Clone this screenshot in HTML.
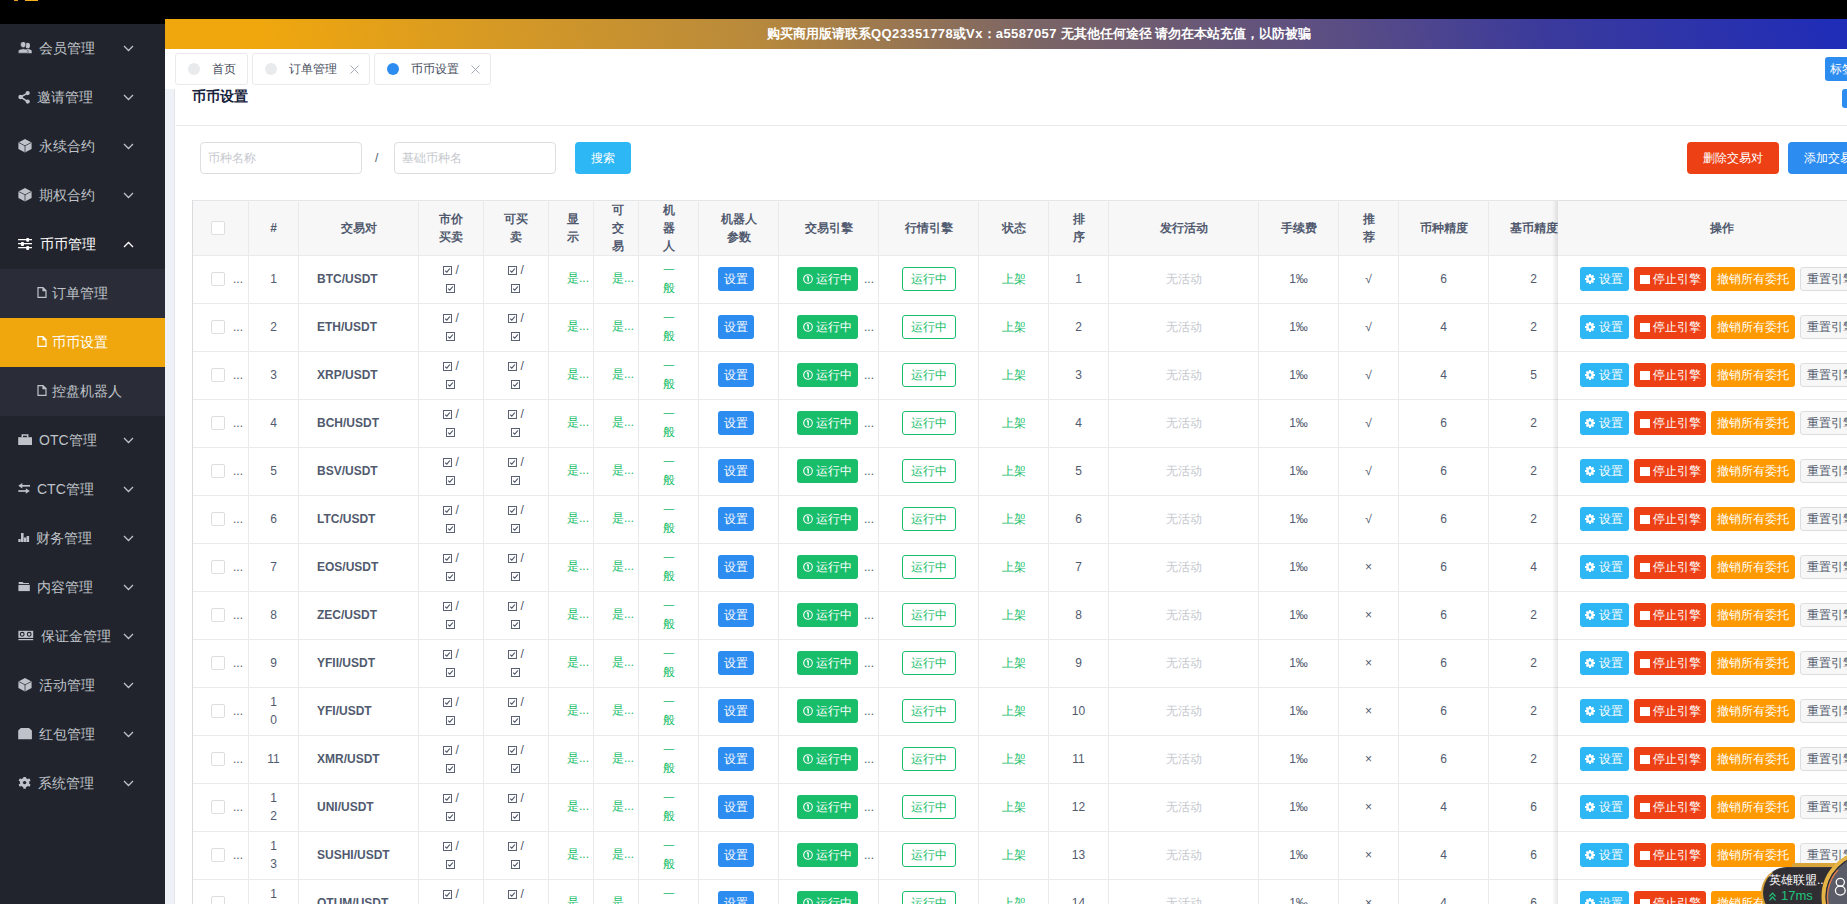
<!DOCTYPE html><html><head><meta charset="utf-8"><style>
*{box-sizing:border-box;margin:0;padding:0}
html,body{width:1847px;height:904px;overflow:hidden;background:#fff;font-family:"Liberation Sans",sans-serif;font-size:12px;color:#515a6e}
.abs{position:absolute}
#top{left:0;top:0;width:1847px;height:24px;background:#000}
#side{left:0;top:24px;width:165px;height:880px;background:#21242c}
.mi{position:absolute;left:0;width:165px;height:49px;color:#bfc2c8;font-size:14px}
.mi .ic{position:absolute;left:18px;top:18px;width:14px;height:14px}
.mi .tx{position:absolute;top:0;line-height:49px;white-space:nowrap}
.mi .cv{position:absolute;left:123px;top:21px;width:11px;height:7px}
.sub{position:absolute;left:0;width:165px;height:49px;color:#bfc2c8;font-size:14px;background:#2a2d37}
.sub .ic{position:absolute;left:37px;top:18px;width:10px;height:11px}
.sub .tx{position:absolute;left:52px;top:0;line-height:49px;white-space:nowrap}
#banner{left:165px;top:19px;width:1682px;height:30px;background:linear-gradient(75deg,#f0a70e 0%,#f0a70e 6%,#b98a3c 35%,#7a6466 52%,#5a4d84 70%,#3b3a9c 82%,#1e2cb8 100%)}
#bantext{left:767px;top:19px;height:30px;line-height:30px;color:#fff;font-weight:bold;font-size:13px;white-space:nowrap}
#strip{left:165px;top:89px;width:10px;height:815px;background:#eef1f6;border-right:1px solid #e3e3ea}
.tab{position:absolute;top:53px;height:32px;border:1px solid #e8eaec;border-radius:3px;background:#fff;color:#464c5b;font-size:12px}
.tab .dot{position:absolute;top:9px;width:12px;height:12px;border-radius:50%;background:#e8eaec}
.tab .tt{position:absolute;top:0;line-height:30px;white-space:nowrap}
.tab .x{position:absolute;top:11px;width:9px;height:9px}
#card{left:176px;top:89px;width:1671px;height:815px;background:#fff}
</style></head><body>
<style>
.hd{position:absolute;top:201px;height:54px;background:#f7f7f8}
.c{position:absolute;display:flex;align-items:center;justify-content:center;text-align:center;line-height:18px;font-size:12px;color:#515a6e}
.th{font-weight:bold;color:#515a6e}
.vl{position:absolute;width:1px;background:#e8eaec}
.hl{position:absolute;height:1px;background:#e8eaec}
.cb{position:absolute;width:14px;height:14px;border:1px solid #dcdee2;border-radius:2px;background:#fff}
.g{color:#19be6b}
.btn{display:inline-block;height:24px;line-height:22px;border-radius:3px;color:#fff;font-size:12px;white-space:nowrap;border:1px solid transparent}
</style>
<div id="top" class="abs"><div class="abs" style="left:14px;top:0;width:4px;height:1px;background:#f5a623;border-radius:2px"></div><div class="abs" style="left:25px;top:0;width:13px;height:1px;background:#f5b21c"></div></div>
<div id="side" class="abs">
<div class="mi" style="top:0px;color:#bfc2c8"><svg class="ic" style="top:18px;" viewBox="0 0 14 14"><ellipse cx="9.8" cy="3.6" rx="2.2" ry="2.9" fill="#bfc2c8"/><path d="M7.5 7.2 Q11 6.6 13.7 8.4 V11.2 H9Z" fill="#bfc2c8"/><ellipse cx="5.2" cy="2.6" rx="2.7" ry="3.2" fill="#bfc2c8" stroke="#21242c" stroke-width="0.7"/><path d="M0.3 11.2 V8.6 Q2 7 5.2 6.8 Q8.6 7 10.1 8.6 V11.2Z" fill="#bfc2c8" stroke="#21242c" stroke-width="0.5"/></svg><span class="tx" style="left:39px">会员管理</span><svg class="cv" viewBox="0 0 11 7"><path d="M1 1 L5.5 5.5 L10 1" stroke="#bfc2c8" stroke-width="1.3" fill="none"/></svg></div>
<div class="mi" style="top:49px;color:#bfc2c8"><svg class="ic" style="top:18px;" viewBox="0 0 14 14"><circle cx="9.7" cy="2.1" r="2.1" fill="#bfc2c8"/><circle cx="2.6" cy="6" r="2.3" fill="#bfc2c8"/><circle cx="9.7" cy="10.6" r="2.1" fill="#bfc2c8"/><path d="M2.6 6 L9.7 2.1 M2.6 6 L9.7 10.6" stroke="#bfc2c8" stroke-width="1.5"/></svg><span class="tx" style="left:37px">邀请管理</span><svg class="cv" viewBox="0 0 11 7"><path d="M1 1 L5.5 5.5 L10 1" stroke="#bfc2c8" stroke-width="1.3" fill="none"/></svg></div>
<div class="mi" style="top:98px;color:#bfc2c8"><svg class="ic" style="top:17px;" viewBox="0 0 14 14"><path d="M7 0 L13.6 3.4 V10 L7 13.4 L0.4 10 V3.4Z" fill="#bfc2c8"/><path d="M0.8 3.6 L7 6.8 L13.2 3.6 M7 6.8 V13.2" stroke="#21242c" stroke-width="0.7" fill="none"/></svg><span class="tx" style="left:39px">永续合约</span><svg class="cv" viewBox="0 0 11 7"><path d="M1 1 L5.5 5.5 L10 1" stroke="#bfc2c8" stroke-width="1.3" fill="none"/></svg></div>
<div class="mi" style="top:147px;color:#bfc2c8"><svg class="ic" style="top:17px;" viewBox="0 0 14 14"><path d="M7 0 L13.6 3.4 V10 L7 13.4 L0.4 10 V3.4Z" fill="#bfc2c8"/><path d="M0.8 3.6 L7 6.8 L13.2 3.6 M7 6.8 V13.2" stroke="#21242c" stroke-width="0.7" fill="none"/></svg><span class="tx" style="left:39px">期权合约</span><svg class="cv" viewBox="0 0 11 7"><path d="M1 1 L5.5 5.5 L10 1" stroke="#bfc2c8" stroke-width="1.3" fill="none"/></svg></div>
<div class="mi" style="top:196px;color:#fff"><svg class="ic" style="top:18px;" viewBox="0 0 14 14"><path d="M0.1 1.6 H14 M0.1 5.6 H14 M0.1 9.6 H14" stroke="#fff" stroke-width="1.4"/><rect x="8.2" y="0" width="2.9" height="3.8" rx="1" fill="#fff"/><rect x="2.9" y="4" width="3.1" height="4" rx="1" fill="#fff"/><rect x="8.2" y="8" width="2.9" height="4" rx="1" fill="#fff"/></svg><span class="tx" style="left:40px">币币管理</span><svg class="cv" viewBox="0 0 11 7"><path d="M1 6 L5.5 1.5 L10 6" stroke="#fff" stroke-width="1.3" fill="none"/></svg></div>
<div class="mi" style="top:392px;color:#bfc2c8"><svg class="ic" style="top:18px;" viewBox="0 0 14 14"><rect x="0.2" y="3.2" width="13.8" height="7.8" fill="#bfc2c8"/><path d="M4.3 3.5 V0.9 H9.7 V3.5" stroke="#bfc2c8" stroke-width="1.5" fill="none"/></svg><span class="tx" style="left:39px">OTC管理</span><svg class="cv" viewBox="0 0 11 7"><path d="M1 1 L5.5 5.5 L10 1" stroke="#bfc2c8" stroke-width="1.3" fill="none"/></svg></div>
<div class="mi" style="top:441px;color:#bfc2c8"><svg class="ic" style="top:18px;" viewBox="0 0 14 14"><path d="M3 2.8 H12" stroke="#bfc2c8" stroke-width="1.7"/><path d="M0.3 2.8 L4.3 0 V5.6Z" fill="#bfc2c8"/><path d="M0.3 8 H9" stroke="#bfc2c8" stroke-width="1.7"/><path d="M11.8 8 L7.8 5.2 V10.8Z" fill="#bfc2c8"/></svg><span class="tx" style="left:37px">CTC管理</span><svg class="cv" viewBox="0 0 11 7"><path d="M1 1 L5.5 5.5 L10 1" stroke="#bfc2c8" stroke-width="1.3" fill="none"/></svg></div>
<div class="mi" style="top:490px;color:#bfc2c8"><svg class="ic" style="top:18px;" viewBox="0 0 14 14"><rect x="0.3" y="7" width="2.4" height="3" fill="#bfc2c8"/><rect x="3" y="1" width="2.6" height="9" fill="#bfc2c8"/><rect x="5.9" y="5.5" width="2.5" height="4.5" fill="#bfc2c8"/><rect x="8.6" y="4" width="2.5" height="6" fill="#bfc2c8"/></svg><span class="tx" style="left:36px">财务管理</span><svg class="cv" viewBox="0 0 11 7"><path d="M1 1 L5.5 5.5 L10 1" stroke="#bfc2c8" stroke-width="1.3" fill="none"/></svg></div>
<div class="mi" style="top:539px;color:#bfc2c8"><svg class="ic" style="top:18px;" viewBox="0 0 14 14"><path d="M0.7 0.9 H4.6 L5.6 2 H11 V3.1 H0.7Z" fill="#bfc2c8"/><rect x="0.4" y="3.9" width="11.4" height="6.2" fill="#bfc2c8"/></svg><span class="tx" style="left:37px">内容管理</span><svg class="cv" viewBox="0 0 11 7"><path d="M1 1 L5.5 5.5 L10 1" stroke="#bfc2c8" stroke-width="1.3" fill="none"/></svg></div>
<div class="mi" style="top:588px;color:#bfc2c8"><svg class="ic" style="top:18px;width:16px" viewBox="0 0 16 14"><rect x="0.4" y="0.8" width="14.8" height="7.1" fill="#bfc2c8"/><circle cx="4.2" cy="4.3" r="1.9" fill="none" stroke="#21242c" stroke-width="1.1"/><circle cx="11.2" cy="4.3" r="1.9" fill="none" stroke="#21242c" stroke-width="1.1"/><rect x="0.4" y="9" width="14.8" height="1.2" fill="#bfc2c8"/></svg><span class="tx" style="left:41px">保证金管理</span><svg class="cv" viewBox="0 0 11 7"><path d="M1 1 L5.5 5.5 L10 1" stroke="#bfc2c8" stroke-width="1.3" fill="none"/></svg></div>
<div class="mi" style="top:637px;color:#bfc2c8"><svg class="ic" style="top:17px;" viewBox="0 0 14 14"><path d="M7 0 L13.6 3.4 V10 L7 13.4 L0.4 10 V3.4Z" fill="#bfc2c8"/><path d="M0.8 3.6 L7 6.8 L13.2 3.6 M7 6.8 V13.2" stroke="#21242c" stroke-width="0.7" fill="none"/></svg><span class="tx" style="left:39px">活动管理</span><svg class="cv" viewBox="0 0 11 7"><path d="M1 1 L5.5 5.5 L10 1" stroke="#bfc2c8" stroke-width="1.3" fill="none"/></svg></div>
<div class="mi" style="top:686px;color:#bfc2c8"><svg class="ic" style="top:18px;" viewBox="0 0 14 14"><path d="M2.8 0 H11 L13.9 2.6 V11.2 H0.2 V2.6Z" fill="#bfc2c8"/></svg><span class="tx" style="left:39px">红包管理</span><svg class="cv" viewBox="0 0 11 7"><path d="M1 1 L5.5 5.5 L10 1" stroke="#bfc2c8" stroke-width="1.3" fill="none"/></svg></div>
<div class="mi" style="top:735px;color:#bfc2c8"><svg class="ic" style="top:18px;" viewBox="0 0 14 14"><g fill="#bfc2c8"><circle cx="6.6" cy="5.6" r="4.7"/><rect x="5.3" y="-0.6" width="2.6" height="12.4" rx="0.5"/><rect x="5.3" y="-0.6" width="2.6" height="12.4" rx="0.5" transform="rotate(60 6.6 5.6)"/><rect x="5.3" y="-0.6" width="2.6" height="12.4" rx="0.5" transform="rotate(120 6.6 5.6)"/></g><circle cx="6.6" cy="5.6" r="1.7" fill="#21242c"/></svg><span class="tx" style="left:38px">系统管理</span><svg class="cv" viewBox="0 0 11 7"><path d="M1 1 L5.5 5.5 L10 1" stroke="#bfc2c8" stroke-width="1.3" fill="none"/></svg></div>
<div class="sub" style="top:245px;background:#2a2d37;color:#bfc2c8"><svg class="ic" viewBox="0 0 10 11"><path d="M1 0.6 H6 L9 3.6 V10.4 H1Z M6 0.6 V3.6 H9" stroke="#bfc2c8" stroke-width="1.2" fill="none"/></svg><span class="tx">订单管理</span></div>
<div class="sub" style="top:294px;background:#f0a70e;color:#fff"><svg class="ic" viewBox="0 0 10 11"><path d="M1 0.6 H6 L9 3.6 V10.4 H1Z M6 0.6 V3.6 H9" stroke="#fff" stroke-width="1.2" fill="none"/></svg><span class="tx">币币设置</span></div>
<div class="sub" style="top:343px;background:#2a2d37;color:#bfc2c8"><svg class="ic" viewBox="0 0 10 11"><path d="M1 0.6 H6 L9 3.6 V10.4 H1Z M6 0.6 V3.6 H9" stroke="#bfc2c8" stroke-width="1.2" fill="none"/></svg><span class="tx">控盘机器人</span></div>
</div>
<div id="banner" class="abs"></div>
<div id="bantext" class="abs">购买商用版请联系<span style="letter-spacing:0.4px">QQ23351778</span>或<span style="letter-spacing:0.4px">Vx</span>：<span style="letter-spacing:0.4px">a5587057 </span>无其他任何途径 请勿在本站充值，以防被骗</div>
<div class="abs" style="left:165px;top:49px;width:1682px;height:40px;background:#fff"></div>
<div id="strip" class="abs"></div>
<div id="card" class="abs"></div>
<div class="tab" style="left:175px;width:73px"><span class="dot" style="left:12px;background:#e8eaec"></span><span class="tt" style="left:36px">首页</span></div>
<div class="tab" style="left:252px;width:118px"><span class="dot" style="left:12px;background:#e8eaec"></span><span class="tt" style="left:36px">订单管理</span><svg class="x" viewBox="0 0 9 9" style="left:97px"><path d="M0.5 0.5 L8.5 8.5 M8.5 0.5 L0.5 8.5" stroke="#a4abb6" stroke-width="1"/></svg></div>
<div class="tab" style="left:374px;width:117px"><span class="dot" style="left:12px;background:#2d8cf0"></span><span class="tt" style="left:36px">币币设置</span><svg class="x" viewBox="0 0 9 9" style="left:96px"><path d="M0.5 0.5 L8.5 8.5 M8.5 0.5 L0.5 8.5" stroke="#a4abb6" stroke-width="1"/></svg></div>
<div class="abs" style="left:1825px;top:57px;width:40px;height:24px;background:#2d8cf0;border-radius:3px;color:#fff;line-height:24px;padding-left:5px;font-size:12px">标签</div>
<div class="abs" style="left:1842px;top:89px;width:20px;height:19px;background:#2d8cf0;border-radius:3px"></div>
<div class="abs" style="left:192px;top:86px;line-height:20px;font-size:14px;font-weight:bold;color:#17233d">币币设置</div>
<div class="abs" style="left:176px;top:125px;width:1671px;height:1px;background:#e8eaec"></div>
<div class="abs" style="left:200px;top:142px;width:162px;height:32px;border:1px solid #dcdee2;border-radius:4px;color:#c5c8ce;line-height:30px;padding-left:7px">币种名称</div>
<div class="abs" style="left:375px;top:142px;line-height:32px;color:#515a6e">/</div>
<div class="abs" style="left:394px;top:142px;width:162px;height:32px;border:1px solid #dcdee2;border-radius:4px;color:#c5c8ce;line-height:30px;padding-left:7px">基础币种名</div>
<div class="abs" style="left:575px;top:142px;width:56px;height:32px;background:#2db7f5;border-radius:4px;color:#fff;line-height:32px;text-align:center">搜索</div>
<div class="abs" style="left:1687px;top:142px;width:92px;height:32px;background:#ed4014;border-radius:4px;color:#fff;line-height:32px;text-align:center">删除交易对</div>
<div class="abs" style="left:1788px;top:142px;width:92px;height:32px;background:#2d8cf0;border-radius:4px;color:#fff;line-height:32px;text-align:center">添加交易对</div>
<div class="abs" style="left:192px;top:200px;width:1655px;height:55px;background:#f7f7f8"></div>
<div class="hl" style="left:192px;top:200px;width:1655px;background:#e3e5e8"></div>
<div class="hl" style="left:192px;top:255px;width:1655px"></div>
<div class="hl" style="left:192px;top:303px;width:1655px"></div>
<div class="hl" style="left:192px;top:351px;width:1655px"></div>
<div class="hl" style="left:192px;top:399px;width:1655px"></div>
<div class="hl" style="left:192px;top:447px;width:1655px"></div>
<div class="hl" style="left:192px;top:495px;width:1655px"></div>
<div class="hl" style="left:192px;top:543px;width:1655px"></div>
<div class="hl" style="left:192px;top:591px;width:1655px"></div>
<div class="hl" style="left:192px;top:639px;width:1655px"></div>
<div class="hl" style="left:192px;top:687px;width:1655px"></div>
<div class="hl" style="left:192px;top:735px;width:1655px"></div>
<div class="hl" style="left:192px;top:783px;width:1655px"></div>
<div class="hl" style="left:192px;top:831px;width:1655px"></div>
<div class="hl" style="left:192px;top:879px;width:1655px"></div>
<div class="hl" style="left:192px;top:927px;width:1655px"></div>
<div class="hl" style="left:192px;top:975px;width:1655px"></div>
<div class="vl" style="left:192px;top:200px;height:704px;background:#d9dbdf"></div>
<div class="vl" style="left:248px;top:200px;height:704px;background:#e8eaec"></div>
<div class="vl" style="left:298px;top:200px;height:704px;background:#e8eaec"></div>
<div class="vl" style="left:418px;top:200px;height:704px;background:#e8eaec"></div>
<div class="vl" style="left:483px;top:200px;height:704px;background:#e8eaec"></div>
<div class="vl" style="left:548px;top:200px;height:704px;background:#e8eaec"></div>
<div class="vl" style="left:593px;top:200px;height:704px;background:#e8eaec"></div>
<div class="vl" style="left:638px;top:200px;height:704px;background:#e8eaec"></div>
<div class="vl" style="left:698px;top:200px;height:704px;background:#e8eaec"></div>
<div class="vl" style="left:778px;top:200px;height:704px;background:#e8eaec"></div>
<div class="vl" style="left:878px;top:200px;height:704px;background:#e8eaec"></div>
<div class="vl" style="left:978px;top:200px;height:704px;background:#e8eaec"></div>
<div class="vl" style="left:1048px;top:200px;height:704px;background:#e8eaec"></div>
<div class="vl" style="left:1108px;top:200px;height:704px;background:#e8eaec"></div>
<div class="vl" style="left:1258px;top:200px;height:704px;background:#e8eaec"></div>
<div class="vl" style="left:1338px;top:200px;height:704px;background:#e8eaec"></div>
<div class="vl" style="left:1398px;top:200px;height:704px;background:#e8eaec"></div>
<div class="vl" style="left:1488px;top:200px;height:704px;background:#e8eaec"></div>
<div class="vl" style="left:1578px;top:200px;height:704px;background:#e8eaec"></div>
<div class="c th" style="left:249px;top:200px;width:49px;height:55px;"><div>#</div></div>
<div class="c th" style="left:299px;top:200px;width:119px;height:55px;"><div>交易对</div></div>
<div class="c th" style="left:419px;top:200px;width:64px;height:55px;"><div>市价<br>买卖</div></div>
<div class="c th" style="left:484px;top:200px;width:64px;height:55px;"><div>可买<br>卖</div></div>
<div class="c th" style="left:549px;top:200px;width:44px;height:55px;padding-left:3px"><div>显<br>示</div></div>
<div class="c th" style="left:594px;top:200px;width:44px;height:55px;padding-left:3px"><div>可<br>交<br>易</div></div>
<div class="c th" style="left:639px;top:200px;width:59px;height:55px;"><div>机<br>器<br>人</div></div>
<div class="c th" style="left:699px;top:200px;width:79px;height:55px;"><div>机器人<br>参数</div></div>
<div class="c th" style="left:779px;top:200px;width:99px;height:55px;"><div>交易引擎</div></div>
<div class="c th" style="left:879px;top:200px;width:99px;height:55px;"><div>行情引擎</div></div>
<div class="c th" style="left:979px;top:200px;width:69px;height:55px;"><div>状态</div></div>
<div class="c th" style="left:1049px;top:200px;width:59px;height:55px;"><div>排<br>序</div></div>
<div class="c th" style="left:1109px;top:200px;width:149px;height:55px;"><div>发行活动</div></div>
<div class="c th" style="left:1259px;top:200px;width:79px;height:55px;"><div>手续费</div></div>
<div class="c th" style="left:1339px;top:200px;width:59px;height:55px;"><div>推<br>荐</div></div>
<div class="c th" style="left:1399px;top:200px;width:89px;height:55px;"><div>币种精度</div></div>
<div class="c th" style="left:1489px;top:200px;width:89px;height:55px;"><div>基币精度</div></div>
<div class="cb" style="left:211px;top:221px"></div>
<div class="cb" style="left:211px;top:272px"></div>
<div class="abs" style="left:233px;top:270px;line-height:18px;font-size:12px;color:#515a6e">...</div>
<div class="c" style="left:249px;top:255px;width:49px;height:47px;"><div>1</div></div>
<div class="abs" style="left:317px;top:256px;height:47px;line-height:47px;font-weight:bold;font-size:12px;color:#515a6e">BTC/USDT</div>
<div class="c" style="left:419px;top:255px;width:64px;height:47px;"><div><svg width="9" height="9" viewBox="0 0 9 9" style="vertical-align:-1px"><rect x="0.5" y="0.5" width="8" height="8" fill="none" stroke="#5a6172" stroke-width="1"/><path d="M2.2 4.6 L3.8 6.2 L6.9 2.5" stroke="#4a5163" stroke-width="1.1" fill="none"/></svg>&nbsp;/<br><svg width="9" height="9" viewBox="0 0 9 9" style="vertical-align:-1px"><rect x="0.5" y="0.5" width="8" height="8" fill="none" stroke="#5a6172" stroke-width="1"/><path d="M2.2 4.6 L3.8 6.2 L6.9 2.5" stroke="#4a5163" stroke-width="1.1" fill="none"/></svg></div></div>
<div class="c" style="left:484px;top:255px;width:64px;height:47px;"><div><svg width="9" height="9" viewBox="0 0 9 9" style="vertical-align:-1px"><rect x="0.5" y="0.5" width="8" height="8" fill="none" stroke="#5a6172" stroke-width="1"/><path d="M2.2 4.6 L3.8 6.2 L6.9 2.5" stroke="#4a5163" stroke-width="1.1" fill="none"/></svg>&nbsp;/<br><svg width="9" height="9" viewBox="0 0 9 9" style="vertical-align:-1px"><rect x="0.5" y="0.5" width="8" height="8" fill="none" stroke="#5a6172" stroke-width="1"/><path d="M2.2 4.6 L3.8 6.2 L6.9 2.5" stroke="#4a5163" stroke-width="1.1" fill="none"/></svg></div></div>
<div class="abs g" style="left:567px;top:255px;line-height:47px">是...</div>
<div class="abs g" style="left:612px;top:255px;line-height:47px">是...</div>
<div class="c g" style="left:639px;top:255px;width:59px;height:47px;"><div>一<br>般</div></div>
<span class="btn abs" style="left:718px;top:267px;background:#2d8cf0;width:36px;text-align:center">设置</span>
<div class="abs" style="left:797px;top:267px"><span class="btn" style="background:#19be6b;width:61px;padding-left:5px;text-align:left"><svg width="10" height="10" viewBox="0 0 10 10" style="margin-right:3px;vertical-align:-1px"><circle cx="5" cy="5" r="4.3" stroke="#fff" stroke-width="1.1" fill="none"/><path d="M5.2 2.6 V7.4 M4 3.6 L5.2 2.6" stroke="#fff" stroke-width="1.3" fill="none"/></svg>运行中</span></div>
<div class="abs" style="left:864px;top:270px;line-height:18px">...</div>
<span class="btn abs" style="left:902px;top:267px;border-color:#19be6b;color:#19be6b;width:54px;background:#fff;text-align:center">运行中</span>
<div class="c g" style="left:979px;top:255px;width:69px;height:47px;"><div>上架</div></div>
<div class="c" style="left:1049px;top:255px;width:59px;height:47px;"><div>1</div></div>
<div class="c" style="left:1109px;top:255px;width:149px;height:47px;color:#c5c8ce"><div>无活动</div></div>
<div class="c" style="left:1259px;top:255px;width:79px;height:47px;"><div>1‰</div></div>
<div class="c" style="left:1339px;top:255px;width:59px;height:47px;"><div>√</div></div>
<div class="c" style="left:1399px;top:255px;width:89px;height:47px;"><div>6</div></div>
<div class="c" style="left:1489px;top:255px;width:89px;height:47px;"><div>2</div></div>
<div class="cb" style="left:211px;top:320px"></div>
<div class="abs" style="left:233px;top:318px;line-height:18px;font-size:12px;color:#515a6e">...</div>
<div class="c" style="left:249px;top:303px;width:49px;height:47px;"><div>2</div></div>
<div class="abs" style="left:317px;top:304px;height:47px;line-height:47px;font-weight:bold;font-size:12px;color:#515a6e">ETH/USDT</div>
<div class="c" style="left:419px;top:303px;width:64px;height:47px;"><div><svg width="9" height="9" viewBox="0 0 9 9" style="vertical-align:-1px"><rect x="0.5" y="0.5" width="8" height="8" fill="none" stroke="#5a6172" stroke-width="1"/><path d="M2.2 4.6 L3.8 6.2 L6.9 2.5" stroke="#4a5163" stroke-width="1.1" fill="none"/></svg>&nbsp;/<br><svg width="9" height="9" viewBox="0 0 9 9" style="vertical-align:-1px"><rect x="0.5" y="0.5" width="8" height="8" fill="none" stroke="#5a6172" stroke-width="1"/><path d="M2.2 4.6 L3.8 6.2 L6.9 2.5" stroke="#4a5163" stroke-width="1.1" fill="none"/></svg></div></div>
<div class="c" style="left:484px;top:303px;width:64px;height:47px;"><div><svg width="9" height="9" viewBox="0 0 9 9" style="vertical-align:-1px"><rect x="0.5" y="0.5" width="8" height="8" fill="none" stroke="#5a6172" stroke-width="1"/><path d="M2.2 4.6 L3.8 6.2 L6.9 2.5" stroke="#4a5163" stroke-width="1.1" fill="none"/></svg>&nbsp;/<br><svg width="9" height="9" viewBox="0 0 9 9" style="vertical-align:-1px"><rect x="0.5" y="0.5" width="8" height="8" fill="none" stroke="#5a6172" stroke-width="1"/><path d="M2.2 4.6 L3.8 6.2 L6.9 2.5" stroke="#4a5163" stroke-width="1.1" fill="none"/></svg></div></div>
<div class="abs g" style="left:567px;top:303px;line-height:47px">是...</div>
<div class="abs g" style="left:612px;top:303px;line-height:47px">是...</div>
<div class="c g" style="left:639px;top:303px;width:59px;height:47px;"><div>一<br>般</div></div>
<span class="btn abs" style="left:718px;top:315px;background:#2d8cf0;width:36px;text-align:center">设置</span>
<div class="abs" style="left:797px;top:315px"><span class="btn" style="background:#19be6b;width:61px;padding-left:5px;text-align:left"><svg width="10" height="10" viewBox="0 0 10 10" style="margin-right:3px;vertical-align:-1px"><circle cx="5" cy="5" r="4.3" stroke="#fff" stroke-width="1.1" fill="none"/><path d="M5.2 2.6 V7.4 M4 3.6 L5.2 2.6" stroke="#fff" stroke-width="1.3" fill="none"/></svg>运行中</span></div>
<div class="abs" style="left:864px;top:318px;line-height:18px">...</div>
<span class="btn abs" style="left:902px;top:315px;border-color:#19be6b;color:#19be6b;width:54px;background:#fff;text-align:center">运行中</span>
<div class="c g" style="left:979px;top:303px;width:69px;height:47px;"><div>上架</div></div>
<div class="c" style="left:1049px;top:303px;width:59px;height:47px;"><div>2</div></div>
<div class="c" style="left:1109px;top:303px;width:149px;height:47px;color:#c5c8ce"><div>无活动</div></div>
<div class="c" style="left:1259px;top:303px;width:79px;height:47px;"><div>1‰</div></div>
<div class="c" style="left:1339px;top:303px;width:59px;height:47px;"><div>√</div></div>
<div class="c" style="left:1399px;top:303px;width:89px;height:47px;"><div>4</div></div>
<div class="c" style="left:1489px;top:303px;width:89px;height:47px;"><div>2</div></div>
<div class="cb" style="left:211px;top:368px"></div>
<div class="abs" style="left:233px;top:366px;line-height:18px;font-size:12px;color:#515a6e">...</div>
<div class="c" style="left:249px;top:351px;width:49px;height:47px;"><div>3</div></div>
<div class="abs" style="left:317px;top:352px;height:47px;line-height:47px;font-weight:bold;font-size:12px;color:#515a6e">XRP/USDT</div>
<div class="c" style="left:419px;top:351px;width:64px;height:47px;"><div><svg width="9" height="9" viewBox="0 0 9 9" style="vertical-align:-1px"><rect x="0.5" y="0.5" width="8" height="8" fill="none" stroke="#5a6172" stroke-width="1"/><path d="M2.2 4.6 L3.8 6.2 L6.9 2.5" stroke="#4a5163" stroke-width="1.1" fill="none"/></svg>&nbsp;/<br><svg width="9" height="9" viewBox="0 0 9 9" style="vertical-align:-1px"><rect x="0.5" y="0.5" width="8" height="8" fill="none" stroke="#5a6172" stroke-width="1"/><path d="M2.2 4.6 L3.8 6.2 L6.9 2.5" stroke="#4a5163" stroke-width="1.1" fill="none"/></svg></div></div>
<div class="c" style="left:484px;top:351px;width:64px;height:47px;"><div><svg width="9" height="9" viewBox="0 0 9 9" style="vertical-align:-1px"><rect x="0.5" y="0.5" width="8" height="8" fill="none" stroke="#5a6172" stroke-width="1"/><path d="M2.2 4.6 L3.8 6.2 L6.9 2.5" stroke="#4a5163" stroke-width="1.1" fill="none"/></svg>&nbsp;/<br><svg width="9" height="9" viewBox="0 0 9 9" style="vertical-align:-1px"><rect x="0.5" y="0.5" width="8" height="8" fill="none" stroke="#5a6172" stroke-width="1"/><path d="M2.2 4.6 L3.8 6.2 L6.9 2.5" stroke="#4a5163" stroke-width="1.1" fill="none"/></svg></div></div>
<div class="abs g" style="left:567px;top:351px;line-height:47px">是...</div>
<div class="abs g" style="left:612px;top:351px;line-height:47px">是...</div>
<div class="c g" style="left:639px;top:351px;width:59px;height:47px;"><div>一<br>般</div></div>
<span class="btn abs" style="left:718px;top:363px;background:#2d8cf0;width:36px;text-align:center">设置</span>
<div class="abs" style="left:797px;top:363px"><span class="btn" style="background:#19be6b;width:61px;padding-left:5px;text-align:left"><svg width="10" height="10" viewBox="0 0 10 10" style="margin-right:3px;vertical-align:-1px"><circle cx="5" cy="5" r="4.3" stroke="#fff" stroke-width="1.1" fill="none"/><path d="M5.2 2.6 V7.4 M4 3.6 L5.2 2.6" stroke="#fff" stroke-width="1.3" fill="none"/></svg>运行中</span></div>
<div class="abs" style="left:864px;top:366px;line-height:18px">...</div>
<span class="btn abs" style="left:902px;top:363px;border-color:#19be6b;color:#19be6b;width:54px;background:#fff;text-align:center">运行中</span>
<div class="c g" style="left:979px;top:351px;width:69px;height:47px;"><div>上架</div></div>
<div class="c" style="left:1049px;top:351px;width:59px;height:47px;"><div>3</div></div>
<div class="c" style="left:1109px;top:351px;width:149px;height:47px;color:#c5c8ce"><div>无活动</div></div>
<div class="c" style="left:1259px;top:351px;width:79px;height:47px;"><div>1‰</div></div>
<div class="c" style="left:1339px;top:351px;width:59px;height:47px;"><div>√</div></div>
<div class="c" style="left:1399px;top:351px;width:89px;height:47px;"><div>4</div></div>
<div class="c" style="left:1489px;top:351px;width:89px;height:47px;"><div>5</div></div>
<div class="cb" style="left:211px;top:416px"></div>
<div class="abs" style="left:233px;top:414px;line-height:18px;font-size:12px;color:#515a6e">...</div>
<div class="c" style="left:249px;top:399px;width:49px;height:47px;"><div>4</div></div>
<div class="abs" style="left:317px;top:400px;height:47px;line-height:47px;font-weight:bold;font-size:12px;color:#515a6e">BCH/USDT</div>
<div class="c" style="left:419px;top:399px;width:64px;height:47px;"><div><svg width="9" height="9" viewBox="0 0 9 9" style="vertical-align:-1px"><rect x="0.5" y="0.5" width="8" height="8" fill="none" stroke="#5a6172" stroke-width="1"/><path d="M2.2 4.6 L3.8 6.2 L6.9 2.5" stroke="#4a5163" stroke-width="1.1" fill="none"/></svg>&nbsp;/<br><svg width="9" height="9" viewBox="0 0 9 9" style="vertical-align:-1px"><rect x="0.5" y="0.5" width="8" height="8" fill="none" stroke="#5a6172" stroke-width="1"/><path d="M2.2 4.6 L3.8 6.2 L6.9 2.5" stroke="#4a5163" stroke-width="1.1" fill="none"/></svg></div></div>
<div class="c" style="left:484px;top:399px;width:64px;height:47px;"><div><svg width="9" height="9" viewBox="0 0 9 9" style="vertical-align:-1px"><rect x="0.5" y="0.5" width="8" height="8" fill="none" stroke="#5a6172" stroke-width="1"/><path d="M2.2 4.6 L3.8 6.2 L6.9 2.5" stroke="#4a5163" stroke-width="1.1" fill="none"/></svg>&nbsp;/<br><svg width="9" height="9" viewBox="0 0 9 9" style="vertical-align:-1px"><rect x="0.5" y="0.5" width="8" height="8" fill="none" stroke="#5a6172" stroke-width="1"/><path d="M2.2 4.6 L3.8 6.2 L6.9 2.5" stroke="#4a5163" stroke-width="1.1" fill="none"/></svg></div></div>
<div class="abs g" style="left:567px;top:399px;line-height:47px">是...</div>
<div class="abs g" style="left:612px;top:399px;line-height:47px">是...</div>
<div class="c g" style="left:639px;top:399px;width:59px;height:47px;"><div>一<br>般</div></div>
<span class="btn abs" style="left:718px;top:411px;background:#2d8cf0;width:36px;text-align:center">设置</span>
<div class="abs" style="left:797px;top:411px"><span class="btn" style="background:#19be6b;width:61px;padding-left:5px;text-align:left"><svg width="10" height="10" viewBox="0 0 10 10" style="margin-right:3px;vertical-align:-1px"><circle cx="5" cy="5" r="4.3" stroke="#fff" stroke-width="1.1" fill="none"/><path d="M5.2 2.6 V7.4 M4 3.6 L5.2 2.6" stroke="#fff" stroke-width="1.3" fill="none"/></svg>运行中</span></div>
<div class="abs" style="left:864px;top:414px;line-height:18px">...</div>
<span class="btn abs" style="left:902px;top:411px;border-color:#19be6b;color:#19be6b;width:54px;background:#fff;text-align:center">运行中</span>
<div class="c g" style="left:979px;top:399px;width:69px;height:47px;"><div>上架</div></div>
<div class="c" style="left:1049px;top:399px;width:59px;height:47px;"><div>4</div></div>
<div class="c" style="left:1109px;top:399px;width:149px;height:47px;color:#c5c8ce"><div>无活动</div></div>
<div class="c" style="left:1259px;top:399px;width:79px;height:47px;"><div>1‰</div></div>
<div class="c" style="left:1339px;top:399px;width:59px;height:47px;"><div>√</div></div>
<div class="c" style="left:1399px;top:399px;width:89px;height:47px;"><div>6</div></div>
<div class="c" style="left:1489px;top:399px;width:89px;height:47px;"><div>2</div></div>
<div class="cb" style="left:211px;top:464px"></div>
<div class="abs" style="left:233px;top:462px;line-height:18px;font-size:12px;color:#515a6e">...</div>
<div class="c" style="left:249px;top:447px;width:49px;height:47px;"><div>5</div></div>
<div class="abs" style="left:317px;top:448px;height:47px;line-height:47px;font-weight:bold;font-size:12px;color:#515a6e">BSV/USDT</div>
<div class="c" style="left:419px;top:447px;width:64px;height:47px;"><div><svg width="9" height="9" viewBox="0 0 9 9" style="vertical-align:-1px"><rect x="0.5" y="0.5" width="8" height="8" fill="none" stroke="#5a6172" stroke-width="1"/><path d="M2.2 4.6 L3.8 6.2 L6.9 2.5" stroke="#4a5163" stroke-width="1.1" fill="none"/></svg>&nbsp;/<br><svg width="9" height="9" viewBox="0 0 9 9" style="vertical-align:-1px"><rect x="0.5" y="0.5" width="8" height="8" fill="none" stroke="#5a6172" stroke-width="1"/><path d="M2.2 4.6 L3.8 6.2 L6.9 2.5" stroke="#4a5163" stroke-width="1.1" fill="none"/></svg></div></div>
<div class="c" style="left:484px;top:447px;width:64px;height:47px;"><div><svg width="9" height="9" viewBox="0 0 9 9" style="vertical-align:-1px"><rect x="0.5" y="0.5" width="8" height="8" fill="none" stroke="#5a6172" stroke-width="1"/><path d="M2.2 4.6 L3.8 6.2 L6.9 2.5" stroke="#4a5163" stroke-width="1.1" fill="none"/></svg>&nbsp;/<br><svg width="9" height="9" viewBox="0 0 9 9" style="vertical-align:-1px"><rect x="0.5" y="0.5" width="8" height="8" fill="none" stroke="#5a6172" stroke-width="1"/><path d="M2.2 4.6 L3.8 6.2 L6.9 2.5" stroke="#4a5163" stroke-width="1.1" fill="none"/></svg></div></div>
<div class="abs g" style="left:567px;top:447px;line-height:47px">是...</div>
<div class="abs g" style="left:612px;top:447px;line-height:47px">是...</div>
<div class="c g" style="left:639px;top:447px;width:59px;height:47px;"><div>一<br>般</div></div>
<span class="btn abs" style="left:718px;top:459px;background:#2d8cf0;width:36px;text-align:center">设置</span>
<div class="abs" style="left:797px;top:459px"><span class="btn" style="background:#19be6b;width:61px;padding-left:5px;text-align:left"><svg width="10" height="10" viewBox="0 0 10 10" style="margin-right:3px;vertical-align:-1px"><circle cx="5" cy="5" r="4.3" stroke="#fff" stroke-width="1.1" fill="none"/><path d="M5.2 2.6 V7.4 M4 3.6 L5.2 2.6" stroke="#fff" stroke-width="1.3" fill="none"/></svg>运行中</span></div>
<div class="abs" style="left:864px;top:462px;line-height:18px">...</div>
<span class="btn abs" style="left:902px;top:459px;border-color:#19be6b;color:#19be6b;width:54px;background:#fff;text-align:center">运行中</span>
<div class="c g" style="left:979px;top:447px;width:69px;height:47px;"><div>上架</div></div>
<div class="c" style="left:1049px;top:447px;width:59px;height:47px;"><div>5</div></div>
<div class="c" style="left:1109px;top:447px;width:149px;height:47px;color:#c5c8ce"><div>无活动</div></div>
<div class="c" style="left:1259px;top:447px;width:79px;height:47px;"><div>1‰</div></div>
<div class="c" style="left:1339px;top:447px;width:59px;height:47px;"><div>√</div></div>
<div class="c" style="left:1399px;top:447px;width:89px;height:47px;"><div>6</div></div>
<div class="c" style="left:1489px;top:447px;width:89px;height:47px;"><div>2</div></div>
<div class="cb" style="left:211px;top:512px"></div>
<div class="abs" style="left:233px;top:510px;line-height:18px;font-size:12px;color:#515a6e">...</div>
<div class="c" style="left:249px;top:495px;width:49px;height:47px;"><div>6</div></div>
<div class="abs" style="left:317px;top:496px;height:47px;line-height:47px;font-weight:bold;font-size:12px;color:#515a6e">LTC/USDT</div>
<div class="c" style="left:419px;top:495px;width:64px;height:47px;"><div><svg width="9" height="9" viewBox="0 0 9 9" style="vertical-align:-1px"><rect x="0.5" y="0.5" width="8" height="8" fill="none" stroke="#5a6172" stroke-width="1"/><path d="M2.2 4.6 L3.8 6.2 L6.9 2.5" stroke="#4a5163" stroke-width="1.1" fill="none"/></svg>&nbsp;/<br><svg width="9" height="9" viewBox="0 0 9 9" style="vertical-align:-1px"><rect x="0.5" y="0.5" width="8" height="8" fill="none" stroke="#5a6172" stroke-width="1"/><path d="M2.2 4.6 L3.8 6.2 L6.9 2.5" stroke="#4a5163" stroke-width="1.1" fill="none"/></svg></div></div>
<div class="c" style="left:484px;top:495px;width:64px;height:47px;"><div><svg width="9" height="9" viewBox="0 0 9 9" style="vertical-align:-1px"><rect x="0.5" y="0.5" width="8" height="8" fill="none" stroke="#5a6172" stroke-width="1"/><path d="M2.2 4.6 L3.8 6.2 L6.9 2.5" stroke="#4a5163" stroke-width="1.1" fill="none"/></svg>&nbsp;/<br><svg width="9" height="9" viewBox="0 0 9 9" style="vertical-align:-1px"><rect x="0.5" y="0.5" width="8" height="8" fill="none" stroke="#5a6172" stroke-width="1"/><path d="M2.2 4.6 L3.8 6.2 L6.9 2.5" stroke="#4a5163" stroke-width="1.1" fill="none"/></svg></div></div>
<div class="abs g" style="left:567px;top:495px;line-height:47px">是...</div>
<div class="abs g" style="left:612px;top:495px;line-height:47px">是...</div>
<div class="c g" style="left:639px;top:495px;width:59px;height:47px;"><div>一<br>般</div></div>
<span class="btn abs" style="left:718px;top:507px;background:#2d8cf0;width:36px;text-align:center">设置</span>
<div class="abs" style="left:797px;top:507px"><span class="btn" style="background:#19be6b;width:61px;padding-left:5px;text-align:left"><svg width="10" height="10" viewBox="0 0 10 10" style="margin-right:3px;vertical-align:-1px"><circle cx="5" cy="5" r="4.3" stroke="#fff" stroke-width="1.1" fill="none"/><path d="M5.2 2.6 V7.4 M4 3.6 L5.2 2.6" stroke="#fff" stroke-width="1.3" fill="none"/></svg>运行中</span></div>
<div class="abs" style="left:864px;top:510px;line-height:18px">...</div>
<span class="btn abs" style="left:902px;top:507px;border-color:#19be6b;color:#19be6b;width:54px;background:#fff;text-align:center">运行中</span>
<div class="c g" style="left:979px;top:495px;width:69px;height:47px;"><div>上架</div></div>
<div class="c" style="left:1049px;top:495px;width:59px;height:47px;"><div>6</div></div>
<div class="c" style="left:1109px;top:495px;width:149px;height:47px;color:#c5c8ce"><div>无活动</div></div>
<div class="c" style="left:1259px;top:495px;width:79px;height:47px;"><div>1‰</div></div>
<div class="c" style="left:1339px;top:495px;width:59px;height:47px;"><div>√</div></div>
<div class="c" style="left:1399px;top:495px;width:89px;height:47px;"><div>6</div></div>
<div class="c" style="left:1489px;top:495px;width:89px;height:47px;"><div>2</div></div>
<div class="cb" style="left:211px;top:560px"></div>
<div class="abs" style="left:233px;top:558px;line-height:18px;font-size:12px;color:#515a6e">...</div>
<div class="c" style="left:249px;top:543px;width:49px;height:47px;"><div>7</div></div>
<div class="abs" style="left:317px;top:544px;height:47px;line-height:47px;font-weight:bold;font-size:12px;color:#515a6e">EOS/USDT</div>
<div class="c" style="left:419px;top:543px;width:64px;height:47px;"><div><svg width="9" height="9" viewBox="0 0 9 9" style="vertical-align:-1px"><rect x="0.5" y="0.5" width="8" height="8" fill="none" stroke="#5a6172" stroke-width="1"/><path d="M2.2 4.6 L3.8 6.2 L6.9 2.5" stroke="#4a5163" stroke-width="1.1" fill="none"/></svg>&nbsp;/<br><svg width="9" height="9" viewBox="0 0 9 9" style="vertical-align:-1px"><rect x="0.5" y="0.5" width="8" height="8" fill="none" stroke="#5a6172" stroke-width="1"/><path d="M2.2 4.6 L3.8 6.2 L6.9 2.5" stroke="#4a5163" stroke-width="1.1" fill="none"/></svg></div></div>
<div class="c" style="left:484px;top:543px;width:64px;height:47px;"><div><svg width="9" height="9" viewBox="0 0 9 9" style="vertical-align:-1px"><rect x="0.5" y="0.5" width="8" height="8" fill="none" stroke="#5a6172" stroke-width="1"/><path d="M2.2 4.6 L3.8 6.2 L6.9 2.5" stroke="#4a5163" stroke-width="1.1" fill="none"/></svg>&nbsp;/<br><svg width="9" height="9" viewBox="0 0 9 9" style="vertical-align:-1px"><rect x="0.5" y="0.5" width="8" height="8" fill="none" stroke="#5a6172" stroke-width="1"/><path d="M2.2 4.6 L3.8 6.2 L6.9 2.5" stroke="#4a5163" stroke-width="1.1" fill="none"/></svg></div></div>
<div class="abs g" style="left:567px;top:543px;line-height:47px">是...</div>
<div class="abs g" style="left:612px;top:543px;line-height:47px">是...</div>
<div class="c g" style="left:639px;top:543px;width:59px;height:47px;"><div>一<br>般</div></div>
<span class="btn abs" style="left:718px;top:555px;background:#2d8cf0;width:36px;text-align:center">设置</span>
<div class="abs" style="left:797px;top:555px"><span class="btn" style="background:#19be6b;width:61px;padding-left:5px;text-align:left"><svg width="10" height="10" viewBox="0 0 10 10" style="margin-right:3px;vertical-align:-1px"><circle cx="5" cy="5" r="4.3" stroke="#fff" stroke-width="1.1" fill="none"/><path d="M5.2 2.6 V7.4 M4 3.6 L5.2 2.6" stroke="#fff" stroke-width="1.3" fill="none"/></svg>运行中</span></div>
<div class="abs" style="left:864px;top:558px;line-height:18px">...</div>
<span class="btn abs" style="left:902px;top:555px;border-color:#19be6b;color:#19be6b;width:54px;background:#fff;text-align:center">运行中</span>
<div class="c g" style="left:979px;top:543px;width:69px;height:47px;"><div>上架</div></div>
<div class="c" style="left:1049px;top:543px;width:59px;height:47px;"><div>7</div></div>
<div class="c" style="left:1109px;top:543px;width:149px;height:47px;color:#c5c8ce"><div>无活动</div></div>
<div class="c" style="left:1259px;top:543px;width:79px;height:47px;"><div>1‰</div></div>
<div class="c" style="left:1339px;top:543px;width:59px;height:47px;"><div>×</div></div>
<div class="c" style="left:1399px;top:543px;width:89px;height:47px;"><div>6</div></div>
<div class="c" style="left:1489px;top:543px;width:89px;height:47px;"><div>4</div></div>
<div class="cb" style="left:211px;top:608px"></div>
<div class="abs" style="left:233px;top:606px;line-height:18px;font-size:12px;color:#515a6e">...</div>
<div class="c" style="left:249px;top:591px;width:49px;height:47px;"><div>8</div></div>
<div class="abs" style="left:317px;top:592px;height:47px;line-height:47px;font-weight:bold;font-size:12px;color:#515a6e">ZEC/USDT</div>
<div class="c" style="left:419px;top:591px;width:64px;height:47px;"><div><svg width="9" height="9" viewBox="0 0 9 9" style="vertical-align:-1px"><rect x="0.5" y="0.5" width="8" height="8" fill="none" stroke="#5a6172" stroke-width="1"/><path d="M2.2 4.6 L3.8 6.2 L6.9 2.5" stroke="#4a5163" stroke-width="1.1" fill="none"/></svg>&nbsp;/<br><svg width="9" height="9" viewBox="0 0 9 9" style="vertical-align:-1px"><rect x="0.5" y="0.5" width="8" height="8" fill="none" stroke="#5a6172" stroke-width="1"/><path d="M2.2 4.6 L3.8 6.2 L6.9 2.5" stroke="#4a5163" stroke-width="1.1" fill="none"/></svg></div></div>
<div class="c" style="left:484px;top:591px;width:64px;height:47px;"><div><svg width="9" height="9" viewBox="0 0 9 9" style="vertical-align:-1px"><rect x="0.5" y="0.5" width="8" height="8" fill="none" stroke="#5a6172" stroke-width="1"/><path d="M2.2 4.6 L3.8 6.2 L6.9 2.5" stroke="#4a5163" stroke-width="1.1" fill="none"/></svg>&nbsp;/<br><svg width="9" height="9" viewBox="0 0 9 9" style="vertical-align:-1px"><rect x="0.5" y="0.5" width="8" height="8" fill="none" stroke="#5a6172" stroke-width="1"/><path d="M2.2 4.6 L3.8 6.2 L6.9 2.5" stroke="#4a5163" stroke-width="1.1" fill="none"/></svg></div></div>
<div class="abs g" style="left:567px;top:591px;line-height:47px">是...</div>
<div class="abs g" style="left:612px;top:591px;line-height:47px">是...</div>
<div class="c g" style="left:639px;top:591px;width:59px;height:47px;"><div>一<br>般</div></div>
<span class="btn abs" style="left:718px;top:603px;background:#2d8cf0;width:36px;text-align:center">设置</span>
<div class="abs" style="left:797px;top:603px"><span class="btn" style="background:#19be6b;width:61px;padding-left:5px;text-align:left"><svg width="10" height="10" viewBox="0 0 10 10" style="margin-right:3px;vertical-align:-1px"><circle cx="5" cy="5" r="4.3" stroke="#fff" stroke-width="1.1" fill="none"/><path d="M5.2 2.6 V7.4 M4 3.6 L5.2 2.6" stroke="#fff" stroke-width="1.3" fill="none"/></svg>运行中</span></div>
<div class="abs" style="left:864px;top:606px;line-height:18px">...</div>
<span class="btn abs" style="left:902px;top:603px;border-color:#19be6b;color:#19be6b;width:54px;background:#fff;text-align:center">运行中</span>
<div class="c g" style="left:979px;top:591px;width:69px;height:47px;"><div>上架</div></div>
<div class="c" style="left:1049px;top:591px;width:59px;height:47px;"><div>8</div></div>
<div class="c" style="left:1109px;top:591px;width:149px;height:47px;color:#c5c8ce"><div>无活动</div></div>
<div class="c" style="left:1259px;top:591px;width:79px;height:47px;"><div>1‰</div></div>
<div class="c" style="left:1339px;top:591px;width:59px;height:47px;"><div>×</div></div>
<div class="c" style="left:1399px;top:591px;width:89px;height:47px;"><div>6</div></div>
<div class="c" style="left:1489px;top:591px;width:89px;height:47px;"><div>2</div></div>
<div class="cb" style="left:211px;top:656px"></div>
<div class="abs" style="left:233px;top:654px;line-height:18px;font-size:12px;color:#515a6e">...</div>
<div class="c" style="left:249px;top:639px;width:49px;height:47px;"><div>9</div></div>
<div class="abs" style="left:317px;top:640px;height:47px;line-height:47px;font-weight:bold;font-size:12px;color:#515a6e">YFII/USDT</div>
<div class="c" style="left:419px;top:639px;width:64px;height:47px;"><div><svg width="9" height="9" viewBox="0 0 9 9" style="vertical-align:-1px"><rect x="0.5" y="0.5" width="8" height="8" fill="none" stroke="#5a6172" stroke-width="1"/><path d="M2.2 4.6 L3.8 6.2 L6.9 2.5" stroke="#4a5163" stroke-width="1.1" fill="none"/></svg>&nbsp;/<br><svg width="9" height="9" viewBox="0 0 9 9" style="vertical-align:-1px"><rect x="0.5" y="0.5" width="8" height="8" fill="none" stroke="#5a6172" stroke-width="1"/><path d="M2.2 4.6 L3.8 6.2 L6.9 2.5" stroke="#4a5163" stroke-width="1.1" fill="none"/></svg></div></div>
<div class="c" style="left:484px;top:639px;width:64px;height:47px;"><div><svg width="9" height="9" viewBox="0 0 9 9" style="vertical-align:-1px"><rect x="0.5" y="0.5" width="8" height="8" fill="none" stroke="#5a6172" stroke-width="1"/><path d="M2.2 4.6 L3.8 6.2 L6.9 2.5" stroke="#4a5163" stroke-width="1.1" fill="none"/></svg>&nbsp;/<br><svg width="9" height="9" viewBox="0 0 9 9" style="vertical-align:-1px"><rect x="0.5" y="0.5" width="8" height="8" fill="none" stroke="#5a6172" stroke-width="1"/><path d="M2.2 4.6 L3.8 6.2 L6.9 2.5" stroke="#4a5163" stroke-width="1.1" fill="none"/></svg></div></div>
<div class="abs g" style="left:567px;top:639px;line-height:47px">是...</div>
<div class="abs g" style="left:612px;top:639px;line-height:47px">是...</div>
<div class="c g" style="left:639px;top:639px;width:59px;height:47px;"><div>一<br>般</div></div>
<span class="btn abs" style="left:718px;top:651px;background:#2d8cf0;width:36px;text-align:center">设置</span>
<div class="abs" style="left:797px;top:651px"><span class="btn" style="background:#19be6b;width:61px;padding-left:5px;text-align:left"><svg width="10" height="10" viewBox="0 0 10 10" style="margin-right:3px;vertical-align:-1px"><circle cx="5" cy="5" r="4.3" stroke="#fff" stroke-width="1.1" fill="none"/><path d="M5.2 2.6 V7.4 M4 3.6 L5.2 2.6" stroke="#fff" stroke-width="1.3" fill="none"/></svg>运行中</span></div>
<div class="abs" style="left:864px;top:654px;line-height:18px">...</div>
<span class="btn abs" style="left:902px;top:651px;border-color:#19be6b;color:#19be6b;width:54px;background:#fff;text-align:center">运行中</span>
<div class="c g" style="left:979px;top:639px;width:69px;height:47px;"><div>上架</div></div>
<div class="c" style="left:1049px;top:639px;width:59px;height:47px;"><div>9</div></div>
<div class="c" style="left:1109px;top:639px;width:149px;height:47px;color:#c5c8ce"><div>无活动</div></div>
<div class="c" style="left:1259px;top:639px;width:79px;height:47px;"><div>1‰</div></div>
<div class="c" style="left:1339px;top:639px;width:59px;height:47px;"><div>×</div></div>
<div class="c" style="left:1399px;top:639px;width:89px;height:47px;"><div>6</div></div>
<div class="c" style="left:1489px;top:639px;width:89px;height:47px;"><div>2</div></div>
<div class="cb" style="left:211px;top:704px"></div>
<div class="abs" style="left:233px;top:702px;line-height:18px;font-size:12px;color:#515a6e">...</div>
<div class="c" style="left:249px;top:687px;width:49px;height:47px;"><div>1<br>0</div></div>
<div class="abs" style="left:317px;top:688px;height:47px;line-height:47px;font-weight:bold;font-size:12px;color:#515a6e">YFI/USDT</div>
<div class="c" style="left:419px;top:687px;width:64px;height:47px;"><div><svg width="9" height="9" viewBox="0 0 9 9" style="vertical-align:-1px"><rect x="0.5" y="0.5" width="8" height="8" fill="none" stroke="#5a6172" stroke-width="1"/><path d="M2.2 4.6 L3.8 6.2 L6.9 2.5" stroke="#4a5163" stroke-width="1.1" fill="none"/></svg>&nbsp;/<br><svg width="9" height="9" viewBox="0 0 9 9" style="vertical-align:-1px"><rect x="0.5" y="0.5" width="8" height="8" fill="none" stroke="#5a6172" stroke-width="1"/><path d="M2.2 4.6 L3.8 6.2 L6.9 2.5" stroke="#4a5163" stroke-width="1.1" fill="none"/></svg></div></div>
<div class="c" style="left:484px;top:687px;width:64px;height:47px;"><div><svg width="9" height="9" viewBox="0 0 9 9" style="vertical-align:-1px"><rect x="0.5" y="0.5" width="8" height="8" fill="none" stroke="#5a6172" stroke-width="1"/><path d="M2.2 4.6 L3.8 6.2 L6.9 2.5" stroke="#4a5163" stroke-width="1.1" fill="none"/></svg>&nbsp;/<br><svg width="9" height="9" viewBox="0 0 9 9" style="vertical-align:-1px"><rect x="0.5" y="0.5" width="8" height="8" fill="none" stroke="#5a6172" stroke-width="1"/><path d="M2.2 4.6 L3.8 6.2 L6.9 2.5" stroke="#4a5163" stroke-width="1.1" fill="none"/></svg></div></div>
<div class="abs g" style="left:567px;top:687px;line-height:47px">是...</div>
<div class="abs g" style="left:612px;top:687px;line-height:47px">是...</div>
<div class="c g" style="left:639px;top:687px;width:59px;height:47px;"><div>一<br>般</div></div>
<span class="btn abs" style="left:718px;top:699px;background:#2d8cf0;width:36px;text-align:center">设置</span>
<div class="abs" style="left:797px;top:699px"><span class="btn" style="background:#19be6b;width:61px;padding-left:5px;text-align:left"><svg width="10" height="10" viewBox="0 0 10 10" style="margin-right:3px;vertical-align:-1px"><circle cx="5" cy="5" r="4.3" stroke="#fff" stroke-width="1.1" fill="none"/><path d="M5.2 2.6 V7.4 M4 3.6 L5.2 2.6" stroke="#fff" stroke-width="1.3" fill="none"/></svg>运行中</span></div>
<div class="abs" style="left:864px;top:702px;line-height:18px">...</div>
<span class="btn abs" style="left:902px;top:699px;border-color:#19be6b;color:#19be6b;width:54px;background:#fff;text-align:center">运行中</span>
<div class="c g" style="left:979px;top:687px;width:69px;height:47px;"><div>上架</div></div>
<div class="c" style="left:1049px;top:687px;width:59px;height:47px;"><div>10</div></div>
<div class="c" style="left:1109px;top:687px;width:149px;height:47px;color:#c5c8ce"><div>无活动</div></div>
<div class="c" style="left:1259px;top:687px;width:79px;height:47px;"><div>1‰</div></div>
<div class="c" style="left:1339px;top:687px;width:59px;height:47px;"><div>×</div></div>
<div class="c" style="left:1399px;top:687px;width:89px;height:47px;"><div>6</div></div>
<div class="c" style="left:1489px;top:687px;width:89px;height:47px;"><div>2</div></div>
<div class="cb" style="left:211px;top:752px"></div>
<div class="abs" style="left:233px;top:750px;line-height:18px;font-size:12px;color:#515a6e">...</div>
<div class="c" style="left:249px;top:735px;width:49px;height:47px;"><div>11</div></div>
<div class="abs" style="left:317px;top:736px;height:47px;line-height:47px;font-weight:bold;font-size:12px;color:#515a6e">XMR/USDT</div>
<div class="c" style="left:419px;top:735px;width:64px;height:47px;"><div><svg width="9" height="9" viewBox="0 0 9 9" style="vertical-align:-1px"><rect x="0.5" y="0.5" width="8" height="8" fill="none" stroke="#5a6172" stroke-width="1"/><path d="M2.2 4.6 L3.8 6.2 L6.9 2.5" stroke="#4a5163" stroke-width="1.1" fill="none"/></svg>&nbsp;/<br><svg width="9" height="9" viewBox="0 0 9 9" style="vertical-align:-1px"><rect x="0.5" y="0.5" width="8" height="8" fill="none" stroke="#5a6172" stroke-width="1"/><path d="M2.2 4.6 L3.8 6.2 L6.9 2.5" stroke="#4a5163" stroke-width="1.1" fill="none"/></svg></div></div>
<div class="c" style="left:484px;top:735px;width:64px;height:47px;"><div><svg width="9" height="9" viewBox="0 0 9 9" style="vertical-align:-1px"><rect x="0.5" y="0.5" width="8" height="8" fill="none" stroke="#5a6172" stroke-width="1"/><path d="M2.2 4.6 L3.8 6.2 L6.9 2.5" stroke="#4a5163" stroke-width="1.1" fill="none"/></svg>&nbsp;/<br><svg width="9" height="9" viewBox="0 0 9 9" style="vertical-align:-1px"><rect x="0.5" y="0.5" width="8" height="8" fill="none" stroke="#5a6172" stroke-width="1"/><path d="M2.2 4.6 L3.8 6.2 L6.9 2.5" stroke="#4a5163" stroke-width="1.1" fill="none"/></svg></div></div>
<div class="abs g" style="left:567px;top:735px;line-height:47px">是...</div>
<div class="abs g" style="left:612px;top:735px;line-height:47px">是...</div>
<div class="c g" style="left:639px;top:735px;width:59px;height:47px;"><div>一<br>般</div></div>
<span class="btn abs" style="left:718px;top:747px;background:#2d8cf0;width:36px;text-align:center">设置</span>
<div class="abs" style="left:797px;top:747px"><span class="btn" style="background:#19be6b;width:61px;padding-left:5px;text-align:left"><svg width="10" height="10" viewBox="0 0 10 10" style="margin-right:3px;vertical-align:-1px"><circle cx="5" cy="5" r="4.3" stroke="#fff" stroke-width="1.1" fill="none"/><path d="M5.2 2.6 V7.4 M4 3.6 L5.2 2.6" stroke="#fff" stroke-width="1.3" fill="none"/></svg>运行中</span></div>
<div class="abs" style="left:864px;top:750px;line-height:18px">...</div>
<span class="btn abs" style="left:902px;top:747px;border-color:#19be6b;color:#19be6b;width:54px;background:#fff;text-align:center">运行中</span>
<div class="c g" style="left:979px;top:735px;width:69px;height:47px;"><div>上架</div></div>
<div class="c" style="left:1049px;top:735px;width:59px;height:47px;"><div>11</div></div>
<div class="c" style="left:1109px;top:735px;width:149px;height:47px;color:#c5c8ce"><div>无活动</div></div>
<div class="c" style="left:1259px;top:735px;width:79px;height:47px;"><div>1‰</div></div>
<div class="c" style="left:1339px;top:735px;width:59px;height:47px;"><div>×</div></div>
<div class="c" style="left:1399px;top:735px;width:89px;height:47px;"><div>6</div></div>
<div class="c" style="left:1489px;top:735px;width:89px;height:47px;"><div>2</div></div>
<div class="cb" style="left:211px;top:800px"></div>
<div class="abs" style="left:233px;top:798px;line-height:18px;font-size:12px;color:#515a6e">...</div>
<div class="c" style="left:249px;top:783px;width:49px;height:47px;"><div>1<br>2</div></div>
<div class="abs" style="left:317px;top:784px;height:47px;line-height:47px;font-weight:bold;font-size:12px;color:#515a6e">UNI/USDT</div>
<div class="c" style="left:419px;top:783px;width:64px;height:47px;"><div><svg width="9" height="9" viewBox="0 0 9 9" style="vertical-align:-1px"><rect x="0.5" y="0.5" width="8" height="8" fill="none" stroke="#5a6172" stroke-width="1"/><path d="M2.2 4.6 L3.8 6.2 L6.9 2.5" stroke="#4a5163" stroke-width="1.1" fill="none"/></svg>&nbsp;/<br><svg width="9" height="9" viewBox="0 0 9 9" style="vertical-align:-1px"><rect x="0.5" y="0.5" width="8" height="8" fill="none" stroke="#5a6172" stroke-width="1"/><path d="M2.2 4.6 L3.8 6.2 L6.9 2.5" stroke="#4a5163" stroke-width="1.1" fill="none"/></svg></div></div>
<div class="c" style="left:484px;top:783px;width:64px;height:47px;"><div><svg width="9" height="9" viewBox="0 0 9 9" style="vertical-align:-1px"><rect x="0.5" y="0.5" width="8" height="8" fill="none" stroke="#5a6172" stroke-width="1"/><path d="M2.2 4.6 L3.8 6.2 L6.9 2.5" stroke="#4a5163" stroke-width="1.1" fill="none"/></svg>&nbsp;/<br><svg width="9" height="9" viewBox="0 0 9 9" style="vertical-align:-1px"><rect x="0.5" y="0.5" width="8" height="8" fill="none" stroke="#5a6172" stroke-width="1"/><path d="M2.2 4.6 L3.8 6.2 L6.9 2.5" stroke="#4a5163" stroke-width="1.1" fill="none"/></svg></div></div>
<div class="abs g" style="left:567px;top:783px;line-height:47px">是...</div>
<div class="abs g" style="left:612px;top:783px;line-height:47px">是...</div>
<div class="c g" style="left:639px;top:783px;width:59px;height:47px;"><div>一<br>般</div></div>
<span class="btn abs" style="left:718px;top:795px;background:#2d8cf0;width:36px;text-align:center">设置</span>
<div class="abs" style="left:797px;top:795px"><span class="btn" style="background:#19be6b;width:61px;padding-left:5px;text-align:left"><svg width="10" height="10" viewBox="0 0 10 10" style="margin-right:3px;vertical-align:-1px"><circle cx="5" cy="5" r="4.3" stroke="#fff" stroke-width="1.1" fill="none"/><path d="M5.2 2.6 V7.4 M4 3.6 L5.2 2.6" stroke="#fff" stroke-width="1.3" fill="none"/></svg>运行中</span></div>
<div class="abs" style="left:864px;top:798px;line-height:18px">...</div>
<span class="btn abs" style="left:902px;top:795px;border-color:#19be6b;color:#19be6b;width:54px;background:#fff;text-align:center">运行中</span>
<div class="c g" style="left:979px;top:783px;width:69px;height:47px;"><div>上架</div></div>
<div class="c" style="left:1049px;top:783px;width:59px;height:47px;"><div>12</div></div>
<div class="c" style="left:1109px;top:783px;width:149px;height:47px;color:#c5c8ce"><div>无活动</div></div>
<div class="c" style="left:1259px;top:783px;width:79px;height:47px;"><div>1‰</div></div>
<div class="c" style="left:1339px;top:783px;width:59px;height:47px;"><div>×</div></div>
<div class="c" style="left:1399px;top:783px;width:89px;height:47px;"><div>4</div></div>
<div class="c" style="left:1489px;top:783px;width:89px;height:47px;"><div>6</div></div>
<div class="cb" style="left:211px;top:848px"></div>
<div class="abs" style="left:233px;top:846px;line-height:18px;font-size:12px;color:#515a6e">...</div>
<div class="c" style="left:249px;top:831px;width:49px;height:47px;"><div>1<br>3</div></div>
<div class="abs" style="left:317px;top:832px;height:47px;line-height:47px;font-weight:bold;font-size:12px;color:#515a6e">SUSHI/USDT</div>
<div class="c" style="left:419px;top:831px;width:64px;height:47px;"><div><svg width="9" height="9" viewBox="0 0 9 9" style="vertical-align:-1px"><rect x="0.5" y="0.5" width="8" height="8" fill="none" stroke="#5a6172" stroke-width="1"/><path d="M2.2 4.6 L3.8 6.2 L6.9 2.5" stroke="#4a5163" stroke-width="1.1" fill="none"/></svg>&nbsp;/<br><svg width="9" height="9" viewBox="0 0 9 9" style="vertical-align:-1px"><rect x="0.5" y="0.5" width="8" height="8" fill="none" stroke="#5a6172" stroke-width="1"/><path d="M2.2 4.6 L3.8 6.2 L6.9 2.5" stroke="#4a5163" stroke-width="1.1" fill="none"/></svg></div></div>
<div class="c" style="left:484px;top:831px;width:64px;height:47px;"><div><svg width="9" height="9" viewBox="0 0 9 9" style="vertical-align:-1px"><rect x="0.5" y="0.5" width="8" height="8" fill="none" stroke="#5a6172" stroke-width="1"/><path d="M2.2 4.6 L3.8 6.2 L6.9 2.5" stroke="#4a5163" stroke-width="1.1" fill="none"/></svg>&nbsp;/<br><svg width="9" height="9" viewBox="0 0 9 9" style="vertical-align:-1px"><rect x="0.5" y="0.5" width="8" height="8" fill="none" stroke="#5a6172" stroke-width="1"/><path d="M2.2 4.6 L3.8 6.2 L6.9 2.5" stroke="#4a5163" stroke-width="1.1" fill="none"/></svg></div></div>
<div class="abs g" style="left:567px;top:831px;line-height:47px">是...</div>
<div class="abs g" style="left:612px;top:831px;line-height:47px">是...</div>
<div class="c g" style="left:639px;top:831px;width:59px;height:47px;"><div>一<br>般</div></div>
<span class="btn abs" style="left:718px;top:843px;background:#2d8cf0;width:36px;text-align:center">设置</span>
<div class="abs" style="left:797px;top:843px"><span class="btn" style="background:#19be6b;width:61px;padding-left:5px;text-align:left"><svg width="10" height="10" viewBox="0 0 10 10" style="margin-right:3px;vertical-align:-1px"><circle cx="5" cy="5" r="4.3" stroke="#fff" stroke-width="1.1" fill="none"/><path d="M5.2 2.6 V7.4 M4 3.6 L5.2 2.6" stroke="#fff" stroke-width="1.3" fill="none"/></svg>运行中</span></div>
<div class="abs" style="left:864px;top:846px;line-height:18px">...</div>
<span class="btn abs" style="left:902px;top:843px;border-color:#19be6b;color:#19be6b;width:54px;background:#fff;text-align:center">运行中</span>
<div class="c g" style="left:979px;top:831px;width:69px;height:47px;"><div>上架</div></div>
<div class="c" style="left:1049px;top:831px;width:59px;height:47px;"><div>13</div></div>
<div class="c" style="left:1109px;top:831px;width:149px;height:47px;color:#c5c8ce"><div>无活动</div></div>
<div class="c" style="left:1259px;top:831px;width:79px;height:47px;"><div>1‰</div></div>
<div class="c" style="left:1339px;top:831px;width:59px;height:47px;"><div>×</div></div>
<div class="c" style="left:1399px;top:831px;width:89px;height:47px;"><div>4</div></div>
<div class="c" style="left:1489px;top:831px;width:89px;height:47px;"><div>6</div></div>
<div class="cb" style="left:211px;top:896px"></div>
<div class="abs" style="left:233px;top:894px;line-height:18px;font-size:12px;color:#515a6e">...</div>
<div class="c" style="left:249px;top:879px;width:49px;height:47px;"><div>1<br>4</div></div>
<div class="abs" style="left:317px;top:880px;height:47px;line-height:47px;font-weight:bold;font-size:12px;color:#515a6e">QTUM/USDT</div>
<div class="c" style="left:419px;top:879px;width:64px;height:47px;"><div><svg width="9" height="9" viewBox="0 0 9 9" style="vertical-align:-1px"><rect x="0.5" y="0.5" width="8" height="8" fill="none" stroke="#5a6172" stroke-width="1"/><path d="M2.2 4.6 L3.8 6.2 L6.9 2.5" stroke="#4a5163" stroke-width="1.1" fill="none"/></svg>&nbsp;/<br><svg width="9" height="9" viewBox="0 0 9 9" style="vertical-align:-1px"><rect x="0.5" y="0.5" width="8" height="8" fill="none" stroke="#5a6172" stroke-width="1"/><path d="M2.2 4.6 L3.8 6.2 L6.9 2.5" stroke="#4a5163" stroke-width="1.1" fill="none"/></svg></div></div>
<div class="c" style="left:484px;top:879px;width:64px;height:47px;"><div><svg width="9" height="9" viewBox="0 0 9 9" style="vertical-align:-1px"><rect x="0.5" y="0.5" width="8" height="8" fill="none" stroke="#5a6172" stroke-width="1"/><path d="M2.2 4.6 L3.8 6.2 L6.9 2.5" stroke="#4a5163" stroke-width="1.1" fill="none"/></svg>&nbsp;/<br><svg width="9" height="9" viewBox="0 0 9 9" style="vertical-align:-1px"><rect x="0.5" y="0.5" width="8" height="8" fill="none" stroke="#5a6172" stroke-width="1"/><path d="M2.2 4.6 L3.8 6.2 L6.9 2.5" stroke="#4a5163" stroke-width="1.1" fill="none"/></svg></div></div>
<div class="abs g" style="left:567px;top:879px;line-height:47px">是...</div>
<div class="abs g" style="left:612px;top:879px;line-height:47px">是...</div>
<div class="c g" style="left:639px;top:879px;width:59px;height:47px;"><div>一<br>般</div></div>
<span class="btn abs" style="left:718px;top:891px;background:#2d8cf0;width:36px;text-align:center">设置</span>
<div class="abs" style="left:797px;top:891px"><span class="btn" style="background:#19be6b;width:61px;padding-left:5px;text-align:left"><svg width="10" height="10" viewBox="0 0 10 10" style="margin-right:3px;vertical-align:-1px"><circle cx="5" cy="5" r="4.3" stroke="#fff" stroke-width="1.1" fill="none"/><path d="M5.2 2.6 V7.4 M4 3.6 L5.2 2.6" stroke="#fff" stroke-width="1.3" fill="none"/></svg>运行中</span></div>
<div class="abs" style="left:864px;top:894px;line-height:18px">...</div>
<span class="btn abs" style="left:902px;top:891px;border-color:#19be6b;color:#19be6b;width:54px;background:#fff;text-align:center">运行中</span>
<div class="c g" style="left:979px;top:879px;width:69px;height:47px;"><div>上架</div></div>
<div class="c" style="left:1049px;top:879px;width:59px;height:47px;"><div>14</div></div>
<div class="c" style="left:1109px;top:879px;width:149px;height:47px;color:#c5c8ce"><div>无活动</div></div>
<div class="c" style="left:1259px;top:879px;width:79px;height:47px;"><div>1‰</div></div>
<div class="c" style="left:1339px;top:879px;width:59px;height:47px;"><div>×</div></div>
<div class="c" style="left:1399px;top:879px;width:89px;height:47px;"><div>4</div></div>
<div class="c" style="left:1489px;top:879px;width:89px;height:47px;"><div>6</div></div>
<div class="abs" style="left:1552px;top:201px;width:6px;height:703px;background:linear-gradient(to right,rgba(0,0,0,0),rgba(0,0,0,.10))"></div>
<div class="abs" style="left:1558px;top:200px;width:300px;height:704px;background:#fff">
<div class="abs" style="left:0;top:0;width:300px;height:1px;background:#dfe1e4"></div>
<div class="abs" style="left:0;top:1px;width:300px;height:54px;background:#f7f7f8;font-weight:bold;line-height:54px;padding-left:152px">操作</div>
<div class="hl" style="left:0;top:55px;width:300px"></div>
<div class="hl" style="left:0;top:103px;width:300px"></div>
<div class="hl" style="left:0;top:151px;width:300px"></div>
<div class="hl" style="left:0;top:199px;width:300px"></div>
<div class="hl" style="left:0;top:247px;width:300px"></div>
<div class="hl" style="left:0;top:295px;width:300px"></div>
<div class="hl" style="left:0;top:343px;width:300px"></div>
<div class="hl" style="left:0;top:391px;width:300px"></div>
<div class="hl" style="left:0;top:439px;width:300px"></div>
<div class="hl" style="left:0;top:487px;width:300px"></div>
<div class="hl" style="left:0;top:535px;width:300px"></div>
<div class="hl" style="left:0;top:583px;width:300px"></div>
<div class="hl" style="left:0;top:631px;width:300px"></div>
<div class="hl" style="left:0;top:679px;width:300px"></div>
<div class="hl" style="left:0;top:727px;width:300px"></div>
<div class="hl" style="left:0;top:775px;width:300px"></div>
<span class="btn abs" style="left:22px;top:67px;width:49px;background:#2db7f5;padding-left:4px"><svg width="10" height="10" viewBox="0 0 10 10" style="margin-right:4px;vertical-align:-1px"><g fill="#fff"><circle cx="5" cy="5" r="3.7"/><rect x="4" y="0" width="2" height="10"/><rect x="0" y="4" width="10" height="2"/><rect x="4" y="0" width="2" height="10" transform="rotate(45 5 5)"/><rect x="4" y="0" width="2" height="10" transform="rotate(-45 5 5)"/></g><ellipse cx="5" cy="5" rx="1.4" ry="1.7" fill="#2db7f5"/></svg>设置</span>
<span class="btn abs" style="left:76px;top:67px;width:72px;background:#ed4014;padding-left:5px"><span style="display:inline-block;width:10px;height:9px;background:#fff;margin-right:3px;vertical-align:-1px"></span>停止引擎</span>
<span class="btn abs" style="left:153px;top:67px;width:84px;background:#ff9900;text-align:center">撤销所有委托</span>
<span class="btn abs" style="left:242px;top:67px;width:60px;background:#f7f7f7;border-color:#dcdee2;color:#515a6e;padding-left:6px">重置引擎</span>
<span class="btn abs" style="left:22px;top:115px;width:49px;background:#2db7f5;padding-left:4px"><svg width="10" height="10" viewBox="0 0 10 10" style="margin-right:4px;vertical-align:-1px"><g fill="#fff"><circle cx="5" cy="5" r="3.7"/><rect x="4" y="0" width="2" height="10"/><rect x="0" y="4" width="10" height="2"/><rect x="4" y="0" width="2" height="10" transform="rotate(45 5 5)"/><rect x="4" y="0" width="2" height="10" transform="rotate(-45 5 5)"/></g><ellipse cx="5" cy="5" rx="1.4" ry="1.7" fill="#2db7f5"/></svg>设置</span>
<span class="btn abs" style="left:76px;top:115px;width:72px;background:#ed4014;padding-left:5px"><span style="display:inline-block;width:10px;height:9px;background:#fff;margin-right:3px;vertical-align:-1px"></span>停止引擎</span>
<span class="btn abs" style="left:153px;top:115px;width:84px;background:#ff9900;text-align:center">撤销所有委托</span>
<span class="btn abs" style="left:242px;top:115px;width:60px;background:#f7f7f7;border-color:#dcdee2;color:#515a6e;padding-left:6px">重置引擎</span>
<span class="btn abs" style="left:22px;top:163px;width:49px;background:#2db7f5;padding-left:4px"><svg width="10" height="10" viewBox="0 0 10 10" style="margin-right:4px;vertical-align:-1px"><g fill="#fff"><circle cx="5" cy="5" r="3.7"/><rect x="4" y="0" width="2" height="10"/><rect x="0" y="4" width="10" height="2"/><rect x="4" y="0" width="2" height="10" transform="rotate(45 5 5)"/><rect x="4" y="0" width="2" height="10" transform="rotate(-45 5 5)"/></g><ellipse cx="5" cy="5" rx="1.4" ry="1.7" fill="#2db7f5"/></svg>设置</span>
<span class="btn abs" style="left:76px;top:163px;width:72px;background:#ed4014;padding-left:5px"><span style="display:inline-block;width:10px;height:9px;background:#fff;margin-right:3px;vertical-align:-1px"></span>停止引擎</span>
<span class="btn abs" style="left:153px;top:163px;width:84px;background:#ff9900;text-align:center">撤销所有委托</span>
<span class="btn abs" style="left:242px;top:163px;width:60px;background:#f7f7f7;border-color:#dcdee2;color:#515a6e;padding-left:6px">重置引擎</span>
<span class="btn abs" style="left:22px;top:211px;width:49px;background:#2db7f5;padding-left:4px"><svg width="10" height="10" viewBox="0 0 10 10" style="margin-right:4px;vertical-align:-1px"><g fill="#fff"><circle cx="5" cy="5" r="3.7"/><rect x="4" y="0" width="2" height="10"/><rect x="0" y="4" width="10" height="2"/><rect x="4" y="0" width="2" height="10" transform="rotate(45 5 5)"/><rect x="4" y="0" width="2" height="10" transform="rotate(-45 5 5)"/></g><ellipse cx="5" cy="5" rx="1.4" ry="1.7" fill="#2db7f5"/></svg>设置</span>
<span class="btn abs" style="left:76px;top:211px;width:72px;background:#ed4014;padding-left:5px"><span style="display:inline-block;width:10px;height:9px;background:#fff;margin-right:3px;vertical-align:-1px"></span>停止引擎</span>
<span class="btn abs" style="left:153px;top:211px;width:84px;background:#ff9900;text-align:center">撤销所有委托</span>
<span class="btn abs" style="left:242px;top:211px;width:60px;background:#f7f7f7;border-color:#dcdee2;color:#515a6e;padding-left:6px">重置引擎</span>
<span class="btn abs" style="left:22px;top:259px;width:49px;background:#2db7f5;padding-left:4px"><svg width="10" height="10" viewBox="0 0 10 10" style="margin-right:4px;vertical-align:-1px"><g fill="#fff"><circle cx="5" cy="5" r="3.7"/><rect x="4" y="0" width="2" height="10"/><rect x="0" y="4" width="10" height="2"/><rect x="4" y="0" width="2" height="10" transform="rotate(45 5 5)"/><rect x="4" y="0" width="2" height="10" transform="rotate(-45 5 5)"/></g><ellipse cx="5" cy="5" rx="1.4" ry="1.7" fill="#2db7f5"/></svg>设置</span>
<span class="btn abs" style="left:76px;top:259px;width:72px;background:#ed4014;padding-left:5px"><span style="display:inline-block;width:10px;height:9px;background:#fff;margin-right:3px;vertical-align:-1px"></span>停止引擎</span>
<span class="btn abs" style="left:153px;top:259px;width:84px;background:#ff9900;text-align:center">撤销所有委托</span>
<span class="btn abs" style="left:242px;top:259px;width:60px;background:#f7f7f7;border-color:#dcdee2;color:#515a6e;padding-left:6px">重置引擎</span>
<span class="btn abs" style="left:22px;top:307px;width:49px;background:#2db7f5;padding-left:4px"><svg width="10" height="10" viewBox="0 0 10 10" style="margin-right:4px;vertical-align:-1px"><g fill="#fff"><circle cx="5" cy="5" r="3.7"/><rect x="4" y="0" width="2" height="10"/><rect x="0" y="4" width="10" height="2"/><rect x="4" y="0" width="2" height="10" transform="rotate(45 5 5)"/><rect x="4" y="0" width="2" height="10" transform="rotate(-45 5 5)"/></g><ellipse cx="5" cy="5" rx="1.4" ry="1.7" fill="#2db7f5"/></svg>设置</span>
<span class="btn abs" style="left:76px;top:307px;width:72px;background:#ed4014;padding-left:5px"><span style="display:inline-block;width:10px;height:9px;background:#fff;margin-right:3px;vertical-align:-1px"></span>停止引擎</span>
<span class="btn abs" style="left:153px;top:307px;width:84px;background:#ff9900;text-align:center">撤销所有委托</span>
<span class="btn abs" style="left:242px;top:307px;width:60px;background:#f7f7f7;border-color:#dcdee2;color:#515a6e;padding-left:6px">重置引擎</span>
<span class="btn abs" style="left:22px;top:355px;width:49px;background:#2db7f5;padding-left:4px"><svg width="10" height="10" viewBox="0 0 10 10" style="margin-right:4px;vertical-align:-1px"><g fill="#fff"><circle cx="5" cy="5" r="3.7"/><rect x="4" y="0" width="2" height="10"/><rect x="0" y="4" width="10" height="2"/><rect x="4" y="0" width="2" height="10" transform="rotate(45 5 5)"/><rect x="4" y="0" width="2" height="10" transform="rotate(-45 5 5)"/></g><ellipse cx="5" cy="5" rx="1.4" ry="1.7" fill="#2db7f5"/></svg>设置</span>
<span class="btn abs" style="left:76px;top:355px;width:72px;background:#ed4014;padding-left:5px"><span style="display:inline-block;width:10px;height:9px;background:#fff;margin-right:3px;vertical-align:-1px"></span>停止引擎</span>
<span class="btn abs" style="left:153px;top:355px;width:84px;background:#ff9900;text-align:center">撤销所有委托</span>
<span class="btn abs" style="left:242px;top:355px;width:60px;background:#f7f7f7;border-color:#dcdee2;color:#515a6e;padding-left:6px">重置引擎</span>
<span class="btn abs" style="left:22px;top:403px;width:49px;background:#2db7f5;padding-left:4px"><svg width="10" height="10" viewBox="0 0 10 10" style="margin-right:4px;vertical-align:-1px"><g fill="#fff"><circle cx="5" cy="5" r="3.7"/><rect x="4" y="0" width="2" height="10"/><rect x="0" y="4" width="10" height="2"/><rect x="4" y="0" width="2" height="10" transform="rotate(45 5 5)"/><rect x="4" y="0" width="2" height="10" transform="rotate(-45 5 5)"/></g><ellipse cx="5" cy="5" rx="1.4" ry="1.7" fill="#2db7f5"/></svg>设置</span>
<span class="btn abs" style="left:76px;top:403px;width:72px;background:#ed4014;padding-left:5px"><span style="display:inline-block;width:10px;height:9px;background:#fff;margin-right:3px;vertical-align:-1px"></span>停止引擎</span>
<span class="btn abs" style="left:153px;top:403px;width:84px;background:#ff9900;text-align:center">撤销所有委托</span>
<span class="btn abs" style="left:242px;top:403px;width:60px;background:#f7f7f7;border-color:#dcdee2;color:#515a6e;padding-left:6px">重置引擎</span>
<span class="btn abs" style="left:22px;top:451px;width:49px;background:#2db7f5;padding-left:4px"><svg width="10" height="10" viewBox="0 0 10 10" style="margin-right:4px;vertical-align:-1px"><g fill="#fff"><circle cx="5" cy="5" r="3.7"/><rect x="4" y="0" width="2" height="10"/><rect x="0" y="4" width="10" height="2"/><rect x="4" y="0" width="2" height="10" transform="rotate(45 5 5)"/><rect x="4" y="0" width="2" height="10" transform="rotate(-45 5 5)"/></g><ellipse cx="5" cy="5" rx="1.4" ry="1.7" fill="#2db7f5"/></svg>设置</span>
<span class="btn abs" style="left:76px;top:451px;width:72px;background:#ed4014;padding-left:5px"><span style="display:inline-block;width:10px;height:9px;background:#fff;margin-right:3px;vertical-align:-1px"></span>停止引擎</span>
<span class="btn abs" style="left:153px;top:451px;width:84px;background:#ff9900;text-align:center">撤销所有委托</span>
<span class="btn abs" style="left:242px;top:451px;width:60px;background:#f7f7f7;border-color:#dcdee2;color:#515a6e;padding-left:6px">重置引擎</span>
<span class="btn abs" style="left:22px;top:499px;width:49px;background:#2db7f5;padding-left:4px"><svg width="10" height="10" viewBox="0 0 10 10" style="margin-right:4px;vertical-align:-1px"><g fill="#fff"><circle cx="5" cy="5" r="3.7"/><rect x="4" y="0" width="2" height="10"/><rect x="0" y="4" width="10" height="2"/><rect x="4" y="0" width="2" height="10" transform="rotate(45 5 5)"/><rect x="4" y="0" width="2" height="10" transform="rotate(-45 5 5)"/></g><ellipse cx="5" cy="5" rx="1.4" ry="1.7" fill="#2db7f5"/></svg>设置</span>
<span class="btn abs" style="left:76px;top:499px;width:72px;background:#ed4014;padding-left:5px"><span style="display:inline-block;width:10px;height:9px;background:#fff;margin-right:3px;vertical-align:-1px"></span>停止引擎</span>
<span class="btn abs" style="left:153px;top:499px;width:84px;background:#ff9900;text-align:center">撤销所有委托</span>
<span class="btn abs" style="left:242px;top:499px;width:60px;background:#f7f7f7;border-color:#dcdee2;color:#515a6e;padding-left:6px">重置引擎</span>
<span class="btn abs" style="left:22px;top:547px;width:49px;background:#2db7f5;padding-left:4px"><svg width="10" height="10" viewBox="0 0 10 10" style="margin-right:4px;vertical-align:-1px"><g fill="#fff"><circle cx="5" cy="5" r="3.7"/><rect x="4" y="0" width="2" height="10"/><rect x="0" y="4" width="10" height="2"/><rect x="4" y="0" width="2" height="10" transform="rotate(45 5 5)"/><rect x="4" y="0" width="2" height="10" transform="rotate(-45 5 5)"/></g><ellipse cx="5" cy="5" rx="1.4" ry="1.7" fill="#2db7f5"/></svg>设置</span>
<span class="btn abs" style="left:76px;top:547px;width:72px;background:#ed4014;padding-left:5px"><span style="display:inline-block;width:10px;height:9px;background:#fff;margin-right:3px;vertical-align:-1px"></span>停止引擎</span>
<span class="btn abs" style="left:153px;top:547px;width:84px;background:#ff9900;text-align:center">撤销所有委托</span>
<span class="btn abs" style="left:242px;top:547px;width:60px;background:#f7f7f7;border-color:#dcdee2;color:#515a6e;padding-left:6px">重置引擎</span>
<span class="btn abs" style="left:22px;top:595px;width:49px;background:#2db7f5;padding-left:4px"><svg width="10" height="10" viewBox="0 0 10 10" style="margin-right:4px;vertical-align:-1px"><g fill="#fff"><circle cx="5" cy="5" r="3.7"/><rect x="4" y="0" width="2" height="10"/><rect x="0" y="4" width="10" height="2"/><rect x="4" y="0" width="2" height="10" transform="rotate(45 5 5)"/><rect x="4" y="0" width="2" height="10" transform="rotate(-45 5 5)"/></g><ellipse cx="5" cy="5" rx="1.4" ry="1.7" fill="#2db7f5"/></svg>设置</span>
<span class="btn abs" style="left:76px;top:595px;width:72px;background:#ed4014;padding-left:5px"><span style="display:inline-block;width:10px;height:9px;background:#fff;margin-right:3px;vertical-align:-1px"></span>停止引擎</span>
<span class="btn abs" style="left:153px;top:595px;width:84px;background:#ff9900;text-align:center">撤销所有委托</span>
<span class="btn abs" style="left:242px;top:595px;width:60px;background:#f7f7f7;border-color:#dcdee2;color:#515a6e;padding-left:6px">重置引擎</span>
<span class="btn abs" style="left:22px;top:643px;width:49px;background:#2db7f5;padding-left:4px"><svg width="10" height="10" viewBox="0 0 10 10" style="margin-right:4px;vertical-align:-1px"><g fill="#fff"><circle cx="5" cy="5" r="3.7"/><rect x="4" y="0" width="2" height="10"/><rect x="0" y="4" width="10" height="2"/><rect x="4" y="0" width="2" height="10" transform="rotate(45 5 5)"/><rect x="4" y="0" width="2" height="10" transform="rotate(-45 5 5)"/></g><ellipse cx="5" cy="5" rx="1.4" ry="1.7" fill="#2db7f5"/></svg>设置</span>
<span class="btn abs" style="left:76px;top:643px;width:72px;background:#ed4014;padding-left:5px"><span style="display:inline-block;width:10px;height:9px;background:#fff;margin-right:3px;vertical-align:-1px"></span>停止引擎</span>
<span class="btn abs" style="left:153px;top:643px;width:84px;background:#ff9900;text-align:center">撤销所有委托</span>
<span class="btn abs" style="left:242px;top:643px;width:60px;background:#f7f7f7;border-color:#dcdee2;color:#515a6e;padding-left:6px">重置引擎</span>
<span class="btn abs" style="left:22px;top:691px;width:49px;background:#2db7f5;padding-left:4px"><svg width="10" height="10" viewBox="0 0 10 10" style="margin-right:4px;vertical-align:-1px"><g fill="#fff"><circle cx="5" cy="5" r="3.7"/><rect x="4" y="0" width="2" height="10"/><rect x="0" y="4" width="10" height="2"/><rect x="4" y="0" width="2" height="10" transform="rotate(45 5 5)"/><rect x="4" y="0" width="2" height="10" transform="rotate(-45 5 5)"/></g><ellipse cx="5" cy="5" rx="1.4" ry="1.7" fill="#2db7f5"/></svg>设置</span>
<span class="btn abs" style="left:76px;top:691px;width:72px;background:#ed4014;padding-left:5px"><span style="display:inline-block;width:10px;height:9px;background:#fff;margin-right:3px;vertical-align:-1px"></span>停止引擎</span>
<span class="btn abs" style="left:153px;top:691px;width:84px;background:#ff9900;text-align:center">撤销所有委托</span>
<span class="btn abs" style="left:242px;top:691px;width:60px;background:#f7f7f7;border-color:#dcdee2;color:#515a6e;padding-left:6px">重置引擎</span>
</div>
<div class="abs" style="left:1792px;top:863px;width:60px;height:4px;background:#d9a43a;border-radius:3px 0 0 0"></div>
<div class="abs" style="left:1761px;top:867px;width:100px;height:52px;border-radius:26px 0 0 26px;background:#302e33;border:2px solid #d9a43a;border-right:none;border-top:1px solid #3a3a40"></div>
<div class="abs" style="left:1769px;top:872px;color:#fff;font-size:12px;line-height:16px;white-space:nowrap">英雄联盟..</div>
<svg class="abs" style="left:1769px;top:892px" width="7" height="9" viewBox="0 0 7 9"><path d="M0.5 4.5 L3.5 1.2 L6.5 4.5 M0.5 8.3 L3.5 5 L6.5 8.3" stroke="#1fc47a" stroke-width="1.2" fill="none"/></svg>
<div class="abs" style="left:1781px;top:888px;color:#1fc47a;font-size:13px;line-height:16px;white-space:nowrap">17ms</div>
<svg class="abs" style="left:1818px;top:848px" width="100" height="100" viewBox="0 0 100 100"><circle cx="50" cy="49" r="44.5" fill="#5a5d67" stroke="#e6b444" stroke-width="4"/><circle cx="50" cy="49" r="42" fill="none" stroke="#2a2a30" stroke-width="1.2"/><path d="M11 60 A40 40 0 0 1 20 22" stroke="#e07a4a" stroke-width="1.3" fill="none"/></svg>
<svg class="abs" style="left:1830px;top:874px" width="20" height="24" viewBox="0 0 20 24"><ellipse cx="10.3" cy="8.3" rx="4.1" ry="3.9" stroke="#fff" stroke-width="1.3" fill="none"/><ellipse cx="10.3" cy="16.6" rx="4.9" ry="4.5" stroke="#fff" stroke-width="1.3" fill="none"/></svg>
</body></html>
